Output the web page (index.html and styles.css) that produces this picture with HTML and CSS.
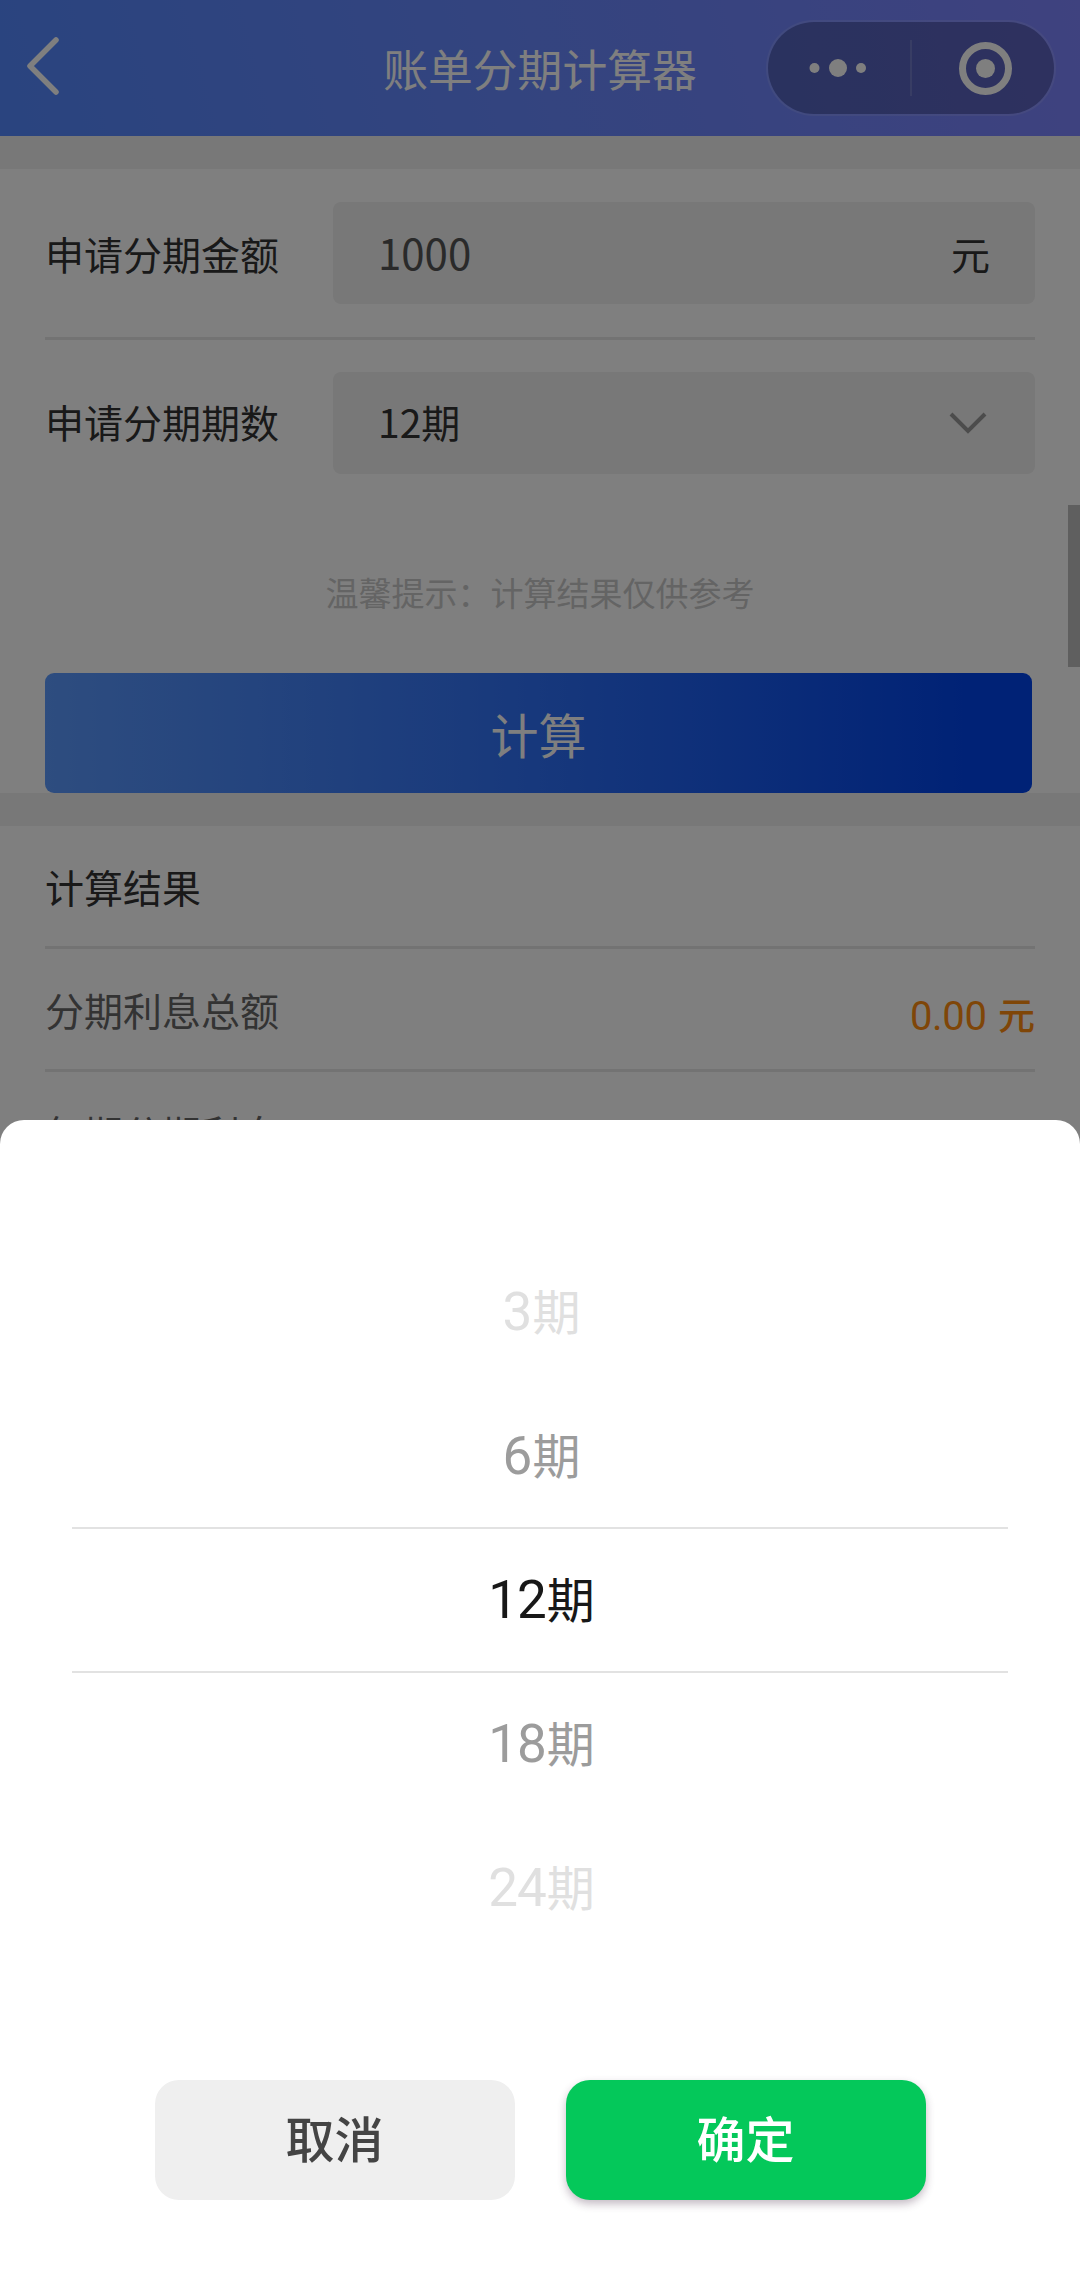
FILE: index.html
```html
<!DOCTYPE html>
<html lang="zh-CN">
<head>
    <meta charset="UTF-8">
    <meta name="viewport" content="width=device-width, initial-scale=1.0">
    <title>账单分期计算器</title>
    <link rel="stylesheet" href="styles.css">
</head>
<body>
    <div class="page">
        <header class="navbar">
            <svg class="back" width="36" height="60" viewBox="0 0 36 60">
                <path d="M31 4 L5 30 L31 56" fill="none" stroke="#fff" stroke-width="5.5" stroke-linecap="round" stroke-linejoin="round"/>
            </svg>
            <h1 class="nav-title">账单分期计算器</h1>
            <div class="capsule">
                <svg class="capsule-icon" viewBox="0 0 142 92">
                    <circle cx="46.5" cy="46" r="5"/>
                    <circle cx="70" cy="46" r="9"/>
                    <circle cx="93" cy="46" r="5"/>
                </svg>
                <div class="capsule-line"></div>
                <svg class="capsule-icon" viewBox="0 0 142 92">
                    <circle cx="73.5" cy="46.5" r="23" fill="none" stroke="#fff" stroke-width="7"/>
                    <circle cx="73.5" cy="46.5" r="9.5"/>
                </svg>
            </div>
        </header>

        <section class="card form">
            <div class="form-row">
                <label class="label">申请分期金额</label>
                <div class="field">
                    <span class="amount">1000</span>
                    <span>元</span>
                </div>
            </div>
            <div class="form-row">
                <label class="label">申请分期期数</label>
                <div class="field">
                    <span class="term">12期</span>
                    <svg class="arrow" width="40" height="24" viewBox="0 0 40 24">
                        <path d="M3 3 L20 20 L37 3" fill="none" stroke="#999" stroke-width="4"/>
                    </svg>
                </div>
            </div>
            <p class="tip">温馨提示：计算结果仅供参考</p>
            <button class="calc-btn">计算</button>
        </section>

        <section class="card result">
            <h2 class="result-title">计算结果</h2>
            <div class="result-row">
                <span>分期利息总额</span>
                <span class="money"><span class="num">0.00</span> 元</span>
            </div>
            <div class="result-row">
                <span>每期分期利息</span>
            </div>
        </section>

        <div class="scrollbar"></div>
    </div>

    <div class="mask"></div>

    <div class="sheet">
        <ul class="picker">
            <li class="far"><span class="num">3</span>期</li>
            <li class="near"><span class="num">6</span>期</li>
            <li class="selected"><span class="num">12</span>期</li>
            <li class="near"><span class="num">18</span>期</li>
            <li class="far"><span class="num">24</span>期</li>
        </ul>
        <div class="actions">
            <button class="btn cancel">取消</button>
            <button class="btn confirm">确定</button>
        </div>
    </div>
</body>
</html>
```
FILE: styles.css
```css
* {
    margin: 0;
    padding: 0;
    box-sizing: border-box;
}

body {
    font-family: "Noto Sans CJK SC", sans-serif;
    font-size: 39px;
    color: #333;
    background: #f0f0f0;
    height: 2296px;
    overflow: hidden;
}

button {
    border: none;
    font-family: inherit;
}

/* nav bar */
.navbar {
    position: relative;
    height: 136px;
    display: flex;
    align-items: center;
    justify-content: space-between;
    padding: 0 24px 0 25px;
    color: #fff;
    background: linear-gradient(75deg, #5488ff, #6888ff 50%, #7e84ff);
}

.back {
    margin-top: -4px;
}

.nav-title {
    position: absolute;
    left: 0;
    width: 100%;
    text-align: center;
    font-size: 44.8px;
    font-weight: 400;
    line-height: 135px;
    height: 136px;
}

.capsule {
    width: 290px;
    height: 96px;
    display: flex;
    align-items: center;
    border: 2px solid rgba(255,255,255,0.12);
    border-radius: 48px;
    background: rgba(0,0,0,0.25);
    background-clip: padding-box;
}

.capsule-icon {
    width: 142px;
    height: 92px;
    fill: #fff;
}

.capsule-line {
    width: 2px;
    height: 56px;
    background: rgba(255,255,255,0.15);
}

/* form */
.card {
    background: #fff;
    padding: 0 45px;
}

.form {
    margin-top: 33px;
    height: 624px;
}

.form-row {
    height: 171px;
    display: flex;
    align-items: center;
    border-bottom: 3px solid #e6e6e6;
}

.form-row + .form-row {
    height: 166px;
    border-bottom: none;
}

.label {
    width: 288px;
    padding-bottom: 1px;
}

.form-row + .form-row .label,
.term {
    padding-bottom: 4px;
}

.field {
    flex: 1;
    height: 102px;
    display: flex;
    align-items: center;
    justify-content: space-between;
    padding: 0 45px;
    border-radius: 8px;
    background: #f0f0f0;
}

.amount {
    font-size: 42px;
    color: #555;
    padding-bottom: 3px;
}

.arrow {
    margin-right: 2px;
}

.tip {
    height: 167px;
    line-height: 173px;
    text-align: center;
    font-size: 33px;
    color: #c8c8c8;
}

.calc-btn {
    display: block;
    width: 987px;
    height: 120px;
    border-radius: 9px;
    font-size: 48px;
    color: #fff;
    background: linear-gradient(90deg, #5c9aff, #2e70f8 50%, #0044ec 94%);
}

/* result list */
.result {
    margin-top: 33px;
    height: 700px;
}

.result-title {
    height: 123px;
    line-height: 121px;
    font-size: 39px;
    font-weight: 400;
    border-bottom: 3px solid #e6e6e6;
}

.result-row {
    height: 123px;
    display: flex;
    align-items: center;
    justify-content: space-between;
    border-bottom: 3px solid #e6e6e6;
    color: #666;
}

.money {
    font-size: 37px;
    font-weight: 500;
    color: #ff8c10;
    padding-top: 9px;
}

.num {
    font-family: Roboto, sans-serif;
    font-weight: 400;
}

.money .num {
    font-size: 40px;
    letter-spacing: -0.3px;
    margin-right: 3px;
}

.scrollbar {
    position: absolute;
    right: 0;
    top: 505px;
    width: 12px;
    height: 162px;
    background: #bfbfbf;
}

.mask {
    position: fixed;
    inset: 0;
    background: rgba(0,0,0,0.5);
}

/* bottom picker */
.sheet {
    position: fixed;
    left: 0;
    right: 0;
    bottom: 0;
    height: 1176px;
    padding: 120px 72px 0;
    border-radius: 24px 24px 0 0;
    background: #fff;
}

.picker {
    list-style: none;
    font-size: 48px;
    text-align: center;
}

.picker li {
    height: 144px;
    line-height: 138px;
    padding-left: 3px;
}

.picker .num {
    font-size: 53px;
    letter-spacing: -1px;
    margin-right: 1px;
}

.picker .far {
    color: #e0e0e0;
}

.picker .near {
    color: #9c9c9c;
}

.picker .selected {
    height: 146px;
    margin: -1px 0;
    color: #181818;
    border-top: 2px solid #e2e2e2;
    border-bottom: 2px solid #e2e2e2;
    line-height: 136px;
}

.actions {
    display: flex;
    justify-content: center;
    gap: 51px;
    margin-top: 120px;
}

.btn {
    width: 360px;
    height: 120px;
    padding-bottom: 7px;
    border-radius: 24px;
    font-size: 49px;
    font-weight: 500;
}

.cancel {
    color: #444;
    background: #efefef;
}

.confirm {
    color: #fff;
    background: #04c85a;
    box-shadow: 0 4px 8px rgba(60,30,60,0.3);
}
```
